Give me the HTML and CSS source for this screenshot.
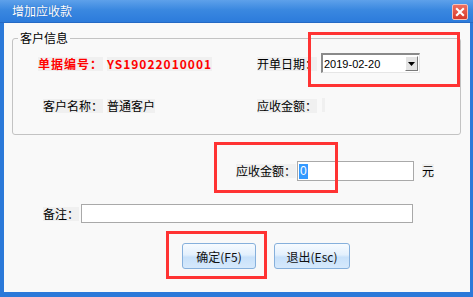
FILE: index.html
```html
<!DOCTYPE html>
<html lang="zh-CN">
<head>
    <meta charset="UTF-8">
    <title>增加应收款</title>
    <link rel="stylesheet" href="styles.css">
</head>
<body>
<div class="window">
    <div class="titlebar">
        <span class="title">增加应收款</span>
        <span class="close-btn">
            <svg width="16" height="16" viewBox="0 0 16 16">
                <path d="M4.5 4.5 L11.5 11.5 M11.5 4.5 L4.5 11.5" stroke="#fff" stroke-width="2.4" stroke-linecap="square"/>
            </svg>
        </span>
    </div>
    <div class="form-body">
        <fieldset class="group">
            <legend>客户信息</legend>
            <div class="info-row">
                <div class="cell-a"><span class="lbl bill">单据编号：</span></div>
                <div class="cell-val"><span class="lbl bill">YS19022010001</span></div>
                <div class="cell-b"><span class="lbl">开单日期：</span></div>
                <div class="datebox">
                    <span class="date-text">2019-02-20</span>
                    <span class="drop-btn">
                        <svg width="7" height="4" viewBox="0 0 7 4"><path d="M0 0 H7 L3.5 4 Z" fill="#000"/></svg>
                    </span>
                </div>
            </div>
            <div class="info-row second">
                <div class="cell-a"><span class="lbl">客户名称：</span></div>
                <div class="cell-val"><span class="lbl">普通客户</span></div>
                <div class="cell-b"><span class="lbl">应收金额：</span></div>
                <span class="lbl blank"></span>
            </div>
        </fieldset>

        <div class="amount-row">
            <span class="lbl">应收金额：</span>
            <div class="text-input amount-input"><span class="selected">0</span></div>
            <span class="lbl unit">元</span>
        </div>

        <div class="note-row">
            <span class="lbl">备注：</span>
            <div class="text-input note-input"></div>
        </div>

        <div class="buttons">
            <button class="win-btn ok-btn">确定(F5)</button>
            <button class="win-btn exit-btn">退出(Esc)</button>
        </div>

        <div class="mark mark-date"></div>
        <div class="mark mark-amount"></div>
        <div class="mark mark-ok"></div>
    </div>
</div>
</body>
</html>
```

FILE: styles.css
```css
body {
    margin: 0;
    font-family: "Noto Sans CJK SC", "Liberation Sans", sans-serif;
    font-size: 12px;
    color: #000;
}

.window {
    width: 473px;
    height: 297px;
    box-sizing: border-box;
    background: #2b79d9;
    display: flex;
    flex-direction: column;
}

.titlebar {
    height: 23px;
    display: flex;
    align-items: center;
    justify-content: space-between;
    padding: 0 5px 0 12px;
    background: linear-gradient(#5ea1ea, #3a88e0 45%, #2c7bdb);
    border-bottom: 1px solid #2469c4;
    box-sizing: border-box;
}
.title {
    color: #fff;
    line-height: 14px;
    text-shadow: 0 0 1px #1d5cb0;
}
.close-btn {
    width: 16px;
    height: 16px;
    margin-top: 1px;
    background: linear-gradient(#f06f5f, #d83a2a);
    border: 1px solid #f4c0b8;
    border-radius: 2px;
    box-sizing: border-box;
    display: flex;
    align-items: center;
    justify-content: center;
}
.close-btn svg {
    width: 14px;
    height: 14px;
}

.form-body {
    position: relative;
    flex: 1;
    margin: 0 3px 5px 4px;
    background: #f9f9f9;
    padding: 8px 0 0 8px;
}

.lbl {
    display: inline-block;
    background: #f0f0f0;
    line-height: 14px;
}

.group {
    margin: 0;
    width: 449px;
    box-sizing: border-box;
    border: 1px solid #c3c3c3;
    border-radius: 3px;
    padding: 8px 0 19px 0;
}
.group legend {
    margin-left: 5px;
    padding: 0 2px;
    line-height: 14px;
}

.info-row {
    display: flex;
    align-items: center;
    height: 20px;
}
.info-row.second {
    margin-top: 22px;
}
.cell-a {
    width: 90px;
    text-align: right;
}
.cell-val {
    width: 150px;
    margin-left: 4px;
}
.cell-b {
    width: 60px;
}
.bill {
    color: #ff0000;
    font-weight: bold;
    letter-spacing: 1px;
}
.blank {
    width: 3px;
    height: 14px;
    margin-left: 5px;
}

.datebox {
    margin-left: 4px;
    width: 99px;
    height: 20px;
    box-sizing: border-box;
    background: #fff;
    border-top: 2px solid #8a8a8a;
    border-left: 2px solid #8a8a8a;
    border-right: 1px solid #e6e6e6;
    border-bottom: 1px solid #e6e6e6;
    display: flex;
    align-items: center;
    justify-content: space-between;
}
.date-text {
    font-family: "Liberation Sans", sans-serif;
    font-size: 11px;
    padding-left: 1px;
    color: #000;
}
.drop-btn {
    width: 13px;
    height: 15px;
    margin-right: 1px;
    background: #e4e4e4;
    border-top: 1px solid #fff;
    border-left: 1px solid #fff;
    border-right: 1px solid #7a7a7a;
    border-bottom: 1px solid #7a7a7a;
    box-sizing: border-box;
    display: flex;
    align-items: center;
    justify-content: center;
}

.text-input {
    background: #fff;
    border: 1px solid #a9a9a9;
    box-sizing: border-box;
    display: flex;
    align-items: center;
}

.amount-row {
    display: flex;
    align-items: center;
    margin: 26px 0 0 224px;
}
.amount-input {
    width: 117px;
    height: 20px;
    margin-left: 1px;
    padding-left: 1px;
}
.selected {
    background: #3399ff;
    color: #fff;
    font-family: "Liberation Sans", sans-serif;
    line-height: 15px;
    padding: 0 1px;
}
.unit {
    margin-left: 8px;
}

.note-row {
    display: flex;
    align-items: center;
    margin: 23px 0 0 31px;
}
.note-input {
    width: 332px;
    height: 19px;
    margin-left: 2px;
}

.buttons {
    display: flex;
    gap: 18px;
    margin: 20px 0 0 170px;
}
.win-btn {
    height: 26px;
    padding: 0;
    font-family: "Noto Sans CJK SC", "Liberation Sans", sans-serif;
    font-size: 12px;
    color: #111;
    background: linear-gradient(#f7fbff, #e3f0fd 45%, #c8e1fa 55%, #d6e9fc);
    border: 1px solid #86b0dc;
    border-radius: 3px;
    cursor: pointer;
}
.ok-btn {
    width: 74px;
}
.exit-btn {
    width: 76px;
}

.mark {
    position: absolute;
    border: 3px solid #ff3333;
    box-sizing: border-box;
}
.mark-date {
    left: 304px;
    top: 9px;
    width: 152px;
    height: 55px;
}
.mark-amount {
    left: 210px;
    top: 119px;
    width: 124px;
    height: 51px;
}
.mark-ok {
    left: 162px;
    top: 208px;
    width: 101px;
    height: 48px;
}
```
